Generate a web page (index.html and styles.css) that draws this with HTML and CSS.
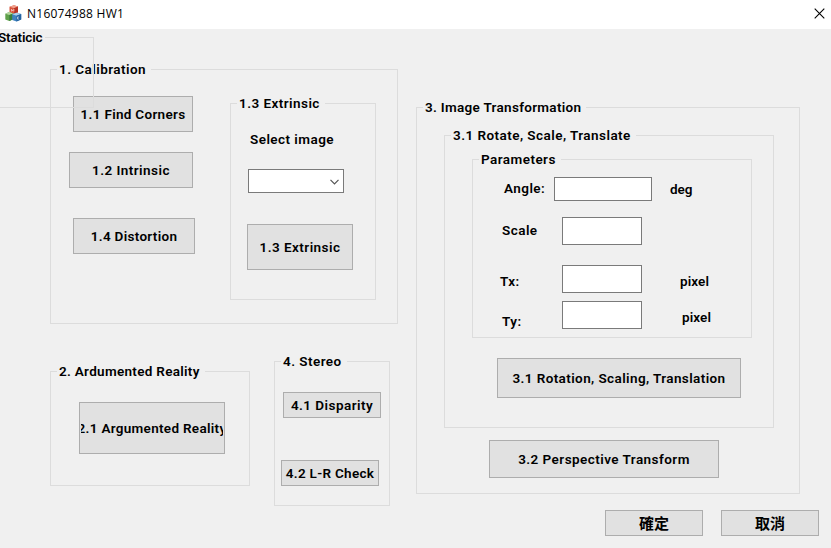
FILE: index.html
```html
<!DOCTYPE html>
<html lang="zh-Hant">
<head>
<meta charset="utf-8">
<title>N16074988 HW1</title>
<link rel="stylesheet" href="styles.css">
</head>
<body>
<header class="titlebar">
  <svg class="app-icon" width="17" height="17" viewBox="0 0 17 17">
    <path d="M4.500 1.800L9 .3l4 1.300v5.600L9 9 4.500 7.400z" fill="#d9543b"/>
    <path d="M4.500 1.800L9 .3l4 1.300-4 1.600z" fill="#f0a08c"/>
    <path d="M9 3.200l4-1.600v5.600L9 9z" fill="#b83325"/>
    <path d="M.3 8.800l4-1.700 4 1.500v5.600l-4 1.700-4-1.500z" fill="#5fa04a"/>
    <path d="M.3 8.800l4-1.700 4 1.500-4 1.500z" fill="#b5d6a0"/>
    <path d="M4.300 10.100l4-1.500v5.600l-4 1.700z" fill="#39803a"/>
    <path d="M7.200 9.200l4.300-1.500L16.200 9v5.600l-4.700 2-4.300-1.700z" fill="#3f83c0"/>
    <path d="M7.200 9.200l4.300-1.500L16.200 9l-4.700 1.800z" fill="#a9cfea"/>
    <path d="M11.500 10.800L16.200 9v5.600l-4.700 2z" fill="#2462a0"/>
    <path d="M6.500 6.500V4.300l1.200 1.500 1.200-1.500v2.200M14 12h-1.500v2H14" fill="none" stroke="#fff" stroke-width=".7" opacity=".8"/>
  </svg>
  <span class="title">N16074988 HW1</span>
  <svg class="close" width="11" height="11" viewBox="0 0 11 11"><path d="M.7.7l9.600 9.600M10.300.7L.7 10.300" stroke="#000" stroke-width="1.100"/></svg>
</header>
<main class="dialog">
  <div class="left">
    <section class="group calibration">
      <h2 class="legend">1. Calibration</h2>
      <div class="columns">
        <div class="steps">
          <button class="btn corners">1.1 Find Corners</button>
          <button class="btn intrinsic">1.2 Intrinsic</button>
          <button class="btn distortion">1.4 Distortion</button>
        </div>
        <section class="group extrinsic">
          <h2 class="legend">1.3 Extrinsic</h2>
          <span class="label select-label">Select image</span>
          <div class="combo"><svg width="9" height="6" viewBox="0 0 9 6"><path d="M.5.8l4 4 4-4" fill="none" stroke="#555" stroke-width="1.200"/></svg></div>
          <button class="btn extrinsic-btn">1.3 Extrinsic</button>
        </section>
      </div>
    </section>
    <div class="lower">
      <section class="group reality">
        <h2 class="legend">2. Ardumented Reality</h2>
        <button class="btn reality-btn"><span class="clip">2.1 Argumented Reality</span></button>
      </section>
      <section class="group stereo">
        <h2 class="legend">4. Stereo</h2>
        <button class="btn disparity">4.1 Disparity</button>
        <button class="btn check">4.2 L-R Check</button>
      </section>
    </div>
  </div>
  <div class="right">
    <section class="group transform">
      <h2 class="legend tight">3. Image Transformation</h2>
      <section class="group rotate">
        <h2 class="legend">3.1 Rotate, Scale, Translate</h2>
        <section class="group params">
          <h2 class="legend">Parameters</h2>
          <div class="row angle"><span class="label">Angle:</span><input class="field"><span class="label unit">deg</span></div>
          <div class="row scale"><span class="label">Scale</span><input class="field"></div>
          <div class="row tx"><span class="label">Tx:</span><input class="field"><span class="label unit">pixel</span></div>
          <div class="row ty"><span class="label">Ty:</span><input class="field"><span class="label unit">pixel</span></div>
        </section>
        <button class="btn rotate-btn">3.1 Rotation, Scaling, Translation</button>
      </section>
      <button class="btn perspective">3.2 Perspective Transform</button>
    </section>
    <footer class="actions">
      <button class="btn cjk">確定</button>
      <button class="btn cjk">取消</button>
    </footer>
  </div>
  <div class="static-frame"><span class="static-text">Staticic</span></div>
</main>
</body>
</html>
```
FILE: styles.css
```css
* { box-sizing: border-box; }
body {
  margin: 0;
  width: 831px;
  height: 548px;
  overflow: hidden;
  background: #f0f0f0;
  color: #000;
  font: 600 13.5px/20px Roboto, "Liberation Sans", sans-serif;
  letter-spacing: 0.45px;
}
.titlebar {
  display: flex;
  align-items: center;
  height: 29px;
  padding: 0 6px 2px 5px;
  background: #fff;
}
.title {
  margin-left: 5px;
  font: 400 12px/20px "Open Sans", "Noto Sans", sans-serif;
  letter-spacing: 0.25px;
}
.close { margin-left: auto; }
.dialog {
  position: relative;
  display: flex;
  height: 519px;
  padding-left: 50px;
  overflow: hidden;
}
.left { width: 348px; padding-top: 40px; }
.right { width: 415px; padding: 78px 0 0 18px; }
.group {
  display: flex;
  flex-direction: column;
  align-items: flex-start;
  flex: none;
  border: 1px solid #dcdcdc;
}
.legend {
  height: 20px;
  margin: -10px 0 0 6px;
  padding: 0 5px 0 2px;
  background: #f0f0f0;
  font: inherit;
  line-height: 19px;
  white-space: nowrap;
}
.tight { letter-spacing: 0.3px; }
.label { white-space: nowrap; }
.btn {
  flex: none;
  padding: 0;
  border: 1px solid #adadad;
  border-radius: 0;
  background: #e1e1e1;
  color: #000;
  font: inherit;
  letter-spacing: inherit;
  white-space: nowrap;
}
.columns { display: flex; align-items: flex-start; }
.steps { display: flex; flex-direction: column; align-items: flex-start; width: 179px; padding-top: 16px; }
.calibration { height: 255px; }
.corners { width: 120px; height: 36px; margin-left: 22px; letter-spacing: 0.3px; }
.intrinsic { width: 124px; height: 36px; margin: 20px 0 0 18px; }
.distortion { width: 122px; height: 36px; margin: 30px 0 0 22px; letter-spacing: 0.3px; }
.extrinsic { width: 146px; height: 197px; margin-top: 23px; }
.select-label { margin: 15px 0 0 19px; }
.combo {
  display: flex;
  align-items: center;
  justify-content: flex-end;
  width: 96px;
  height: 24px;
  margin: 20px 0 0 17px;
  padding: 1px 4px 0 0;
  border: 1px solid #7a7a7a;
  background: #fff;
}
.extrinsic-btn { width: 106px; height: 46px; margin: 31px 0 0 16px; }
.lower { display: flex; align-items: flex-start; gap: 24px; padding-top: 37px; }
.reality { width: 200px; height: 115px; margin-top: 10px; }
.reality .legend, .reality-btn { letter-spacing: 0.3px; }
.reality-btn { width: 146px; height: 52px; margin: 20px 0 0 28px; padding: 0 1px; }
.clip { display: flex; justify-content: center; overflow: hidden; }
.stereo { width: 116px; height: 145px; }
.disparity { width: 98px; height: 26px; margin: 20px 0 0 8px; }
.check { width: 98px; height: 26px; margin: 42px 0 0 6px; letter-spacing: 0.3px; }
.transform { width: 384px; height: 387px; }
.rotate { width: 330px; height: 293px; margin: 17px 0 0 27px; }
.params { width: 280px; height: 179px; margin: 13px 0 0 27px; }
.row { display: flex; align-items: center; height: 28px; }
.row .label { flex: none; }
.field { width: 80px; height: 100%; padding: 0; border: 1px solid #7a7a7a; border-radius: 0; background: #fff; }
.unit { overflow: hidden; }
.angle { height: 24px; margin: 7px 0 0 31px; }
.angle .label { width: 50px; margin-top: -3px; }
.angle .field { width: 98px; }
.angle .unit { width: 24px; margin: 0 0 0 18px; letter-spacing: 0; }
.scale { margin: 16px 0 0 29px; }
.scale .label { width: 60px; margin-top: -3px; }
.tx { margin: 20px 0 0 27px; }
.tx .label { width: 62px; margin-top: 4px; }
.tx .unit { width: 34px; margin-left: 38px; letter-spacing: 0.1px; }
.ty { margin: 8px 0 0 29px; }
.ty .label { width: 60px; margin-top: 12px; }
.ty .unit { width: 34px; margin: 4px 0 0 40px; letter-spacing: 0.1px; }
.rotate-btn { width: 244px; height: 40px; margin: 20px 0 0 52px; letter-spacing: 0.4px; }
.perspective { width: 230px; height: 38px; margin: 12px 0 0 72px; }
.actions { display: flex; gap: 18px; margin: 16px 0 0 189px; }
.cjk {
  width: 98px;
  height: 26px;
  font: 700 15px/20px "Noto Sans CJK TC", sans-serif;
  letter-spacing: 0;
}
.static-frame {
  position: absolute;
  top: 8px;
  left: -8px;
  width: 102px;
  height: 71px;
  border: 1px solid #dcdcdc;
}
.static-text {
  display: block;
  width: 52px;
  height: 20px;
  margin: -10px 0 0;
  padding-left: 5px;
  background: #f0f0f0;
  line-height: 19px;
  letter-spacing: -0.15px;
}
```
